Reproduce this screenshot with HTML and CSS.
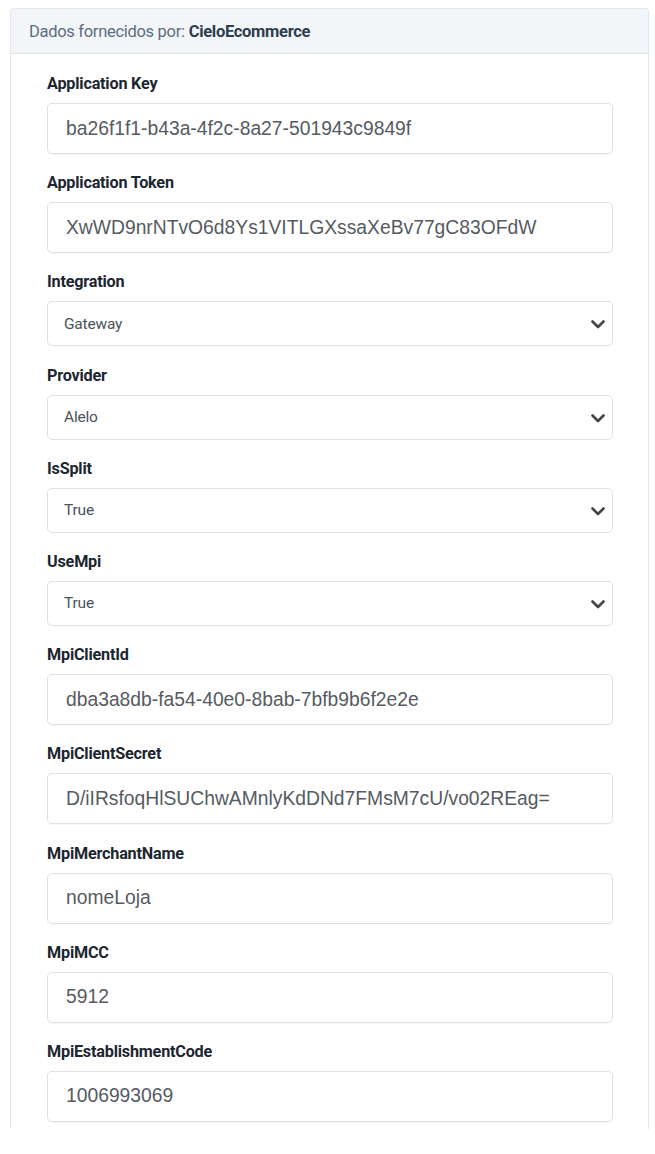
FILE: index.html
```html
<!DOCTYPE html>
<html lang="pt">
<head>
<meta charset="utf-8">
<title>Dados fornecidos por CieloEcommerce</title>
<link rel="stylesheet" href="styles.css">
</head>
<body>
<div class="panel">
  <div class="panel-head">Dados fornecidos por: <strong>CieloEcommerce</strong></div>
  <div class="panel-body">
    <div class="group"><div class="label">Application Key</div><div class="field">ba26f1f1-b43a-4f2c-8a27-501943c9849f</div></div>
    <div class="group"><div class="label">Application Token</div><div class="field">XwWD9nrNTvO6d8Ys1VITLGXssaXeBv77gC83OFdW</div></div>
    <div class="group"><div class="label">Integration</div><div class="select"><span>Gateway</span><svg class="chev" width="14" height="9" viewBox="0 0 14 9"><path d="M1.5 1.5 7 7 12.5 1.5" fill="none" stroke="#444" stroke-width="2.6" stroke-linecap="round" stroke-linejoin="round"/></svg></div></div>
    <div class="group"><div class="label">Provider</div><div class="select"><span>Alelo</span><svg class="chev" width="14" height="9" viewBox="0 0 14 9"><path d="M1.5 1.5 7 7 12.5 1.5" fill="none" stroke="#444" stroke-width="2.6" stroke-linecap="round" stroke-linejoin="round"/></svg></div></div>
    <div class="group"><div class="label">IsSplit</div><div class="select"><span>True</span><svg class="chev" width="14" height="9" viewBox="0 0 14 9"><path d="M1.5 1.5 7 7 12.5 1.5" fill="none" stroke="#444" stroke-width="2.6" stroke-linecap="round" stroke-linejoin="round"/></svg></div></div>
    <div class="group"><div class="label">UseMpi</div><div class="select"><span>True</span><svg class="chev" width="14" height="9" viewBox="0 0 14 9"><path d="M1.5 1.5 7 7 12.5 1.5" fill="none" stroke="#444" stroke-width="2.6" stroke-linecap="round" stroke-linejoin="round"/></svg></div></div>
    <div class="group"><div class="label">MpiClientId</div><div class="field">dba3a8db-fa54-40e0-8bab-7bfb9b6f2e2e</div></div>
    <div class="group"><div class="label">MpiClientSecret</div><div class="field">D/iIRsfoqHlSUChwAMnlyKdDNd7FMsM7cU/vo02REag=</div></div>
    <div class="group"><div class="label">MpiMerchantName</div><div class="field">nomeLoja</div></div>
    <div class="group"><div class="label">MpiMCC</div><div class="field">5912</div></div>
    <div class="group last"><div class="label">MpiEstablishmentCode</div><div class="field">1006993069</div></div>
  </div>
</div>
</body>
</html>
```

FILE: styles.css
```css
html, body {
  margin: 0;
  padding: 0;
  background: #ffffff;
}
body {
  font-family: "Liberation Sans", Arial, sans-serif;
}
.panel {
  box-sizing: border-box;
  width: 639px;
  margin: 8px 0 0 10px;
  border: 1px solid #e2e7ec;
  border-bottom: none;
  border-radius: 4px 4px 0 0;
}
.panel-head {
  box-sizing: border-box;
  height: 45px;
  padding: 0 18px;
  background: #f3f6f9;
  border-bottom: 1px solid #dfe4ea;
  border-radius: 4px 4px 0 0;
  display: flex;
  align-items: center;
  font-family: Roboto, "DejaVu Sans Condensed", sans-serif;
  font-size: 16.5px;
  letter-spacing: -0.3px;
  color: #5d6c7d;
}
.panel-head strong {
  color: #2e3d4f;
  margin-left: 4px;
}
.panel-body {
  padding: 20px 35px 7px 36px;
}
.group {
  margin-bottom: 19.2px;
}
.group.last {
  margin-bottom: 0;
}
.label {
  font-family: Roboto, "DejaVu Sans Condensed", sans-serif;
  font-weight: bold;
  font-size: 16.2px;
  letter-spacing: -0.2px;
  line-height: 20px;
  color: #1c2630;
  margin-bottom: 9px;
}
.field {
  box-sizing: border-box;
  height: 51px;
  border: 1px solid #dde2e8;
  border-radius: 5px;
  padding: 0 18px;
  display: flex;
  align-items: center;
  font-size: 19.3px;
  color: #555b62;
  box-shadow: 0 1px 1px rgba(0,0,0,0.03);
}
.select {
  position: relative;
  box-sizing: border-box;
  height: 45px;
  border: 1px solid #dde2e8;
  border-radius: 5px;
  padding: 0 16px;
  display: flex;
  align-items: center;
  font-family: Roboto, "DejaVu Sans Condensed", sans-serif;
  font-size: 15.5px;
  letter-spacing: -0.2px;
  color: #4a525a;
}
.chev {
  position: absolute;
  right: 7px;
  top: 18px;
}
```
